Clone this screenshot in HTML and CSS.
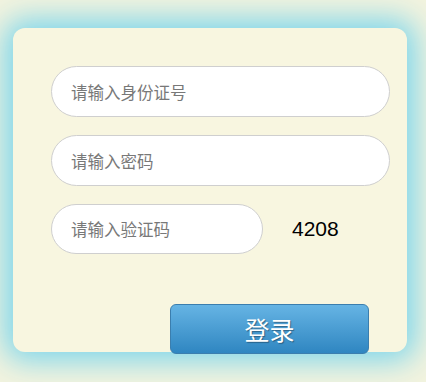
FILE: index.html
```html
<!DOCTYPE html>
<html lang="zh">
<head>
<meta charset="utf-8">
<title>登录</title>
<link rel="stylesheet" href="styles.css">
</head>
<body>
<div class="page">
  <form class="card">
    <input class="field" type="text" placeholder="请输入身份证号">
    <input class="field" type="password" placeholder="请输入密码">
    <div class="code-row">
      <input class="field field-code" type="text" placeholder="请输入验证码">
      <span class="code">4208</span>
    </div>
    <div class="actions">
      <button class="btn" type="button">登录</button>
    </div>
  </form>
</div>
</body>
</html>
```

FILE: styles.css
```css
html, body {
  margin: 0;
  padding: 0;
}
body {
  background: #f3f3de;
  font-family: "Liberation Sans", "Noto Sans CJK SC", sans-serif;
  width: 426px;
  height: 382px;
  overflow: hidden;
}
.page {
  padding: 28px 0 0 13px;
}
.card {
  box-sizing: border-box;
  width: 394px;
  height: 324px;
  background: #f8f6e0;
  border-radius: 12px;
  box-shadow: 0 0 30px 9px #7dd6ec;
  padding: 38px 38px 0 38px;
  display: flex;
  flex-direction: column;
  gap: 18px;
  margin: 0;
}
.field {
  box-sizing: border-box;
  width: 339px;
  height: 51px;
  flex: none;
  border: 1px solid #cfcfcf;
  border-radius: 26px;
  background: #fff;
  padding: 0 0 0 19px;
  font-family: "Noto Sans CJK SC", "Liberation Sans", sans-serif;
  font-size: 16.5px;
  color: #333;
  outline: none;
  margin: 0;
}
.field::placeholder {
  color: #787878;
}
.code-row {
  display: flex;
  align-items: center;
  flex: none;
}
.field-code {
  width: 212px;
  height: 50px;
}
.code {
  margin-left: 29px;
  font-size: 21px;
  color: #000;
  font-family: "Liberation Sans", sans-serif;
}
.actions {
  display: flex;
  justify-content: flex-end;
  width: 318px;
  margin-top: 32px;
  flex: none;
}
.btn {
  box-sizing: border-box;
  width: 199px;
  height: 50px;
  border: 1px solid #3b7eae;
  border-radius: 6px;
  background: linear-gradient(#66b4e4, #2f86c1);
  color: #fff;
  font-family: "Noto Sans CJK SC", "Liberation Sans", sans-serif;
  font-size: 25px;
  text-shadow: 1px 1px 1px rgba(0, 0, 0, 0.35);
  padding: 0;
  cursor: pointer;
}
```
